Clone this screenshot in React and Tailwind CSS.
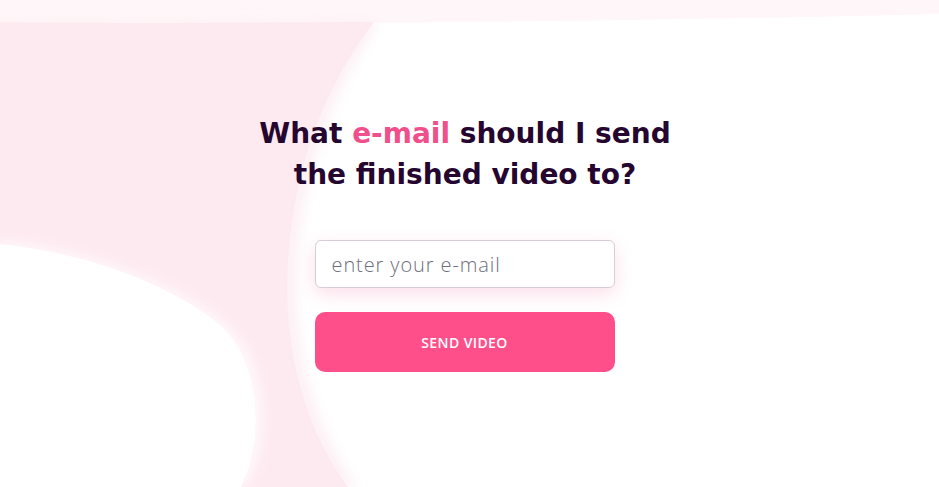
import React from "react";

function Backdrop() {
  return (
    <svg
      className="absolute inset-0 h-full w-full"
      viewBox="0 0 939 487"
      preserveAspectRatio="none"
    >
      <defs>
        <filter id="soft" x="-10%" y="-10%" width="120%" height="120%">
          <feGaussianBlur stdDeviation="6" />
        </filter>
      </defs>
      <rect x="0" y="0" width="939" height="487" fill="#ffffff" />
      <path d="M0 0 H939 V14 C700 20 400 24 0 24 Z" fill="#fef6f8" />
      <path
        d="M0 22 C120 24 260 22 380 22 C334 90 304 170 298 260 C292 350 316 430 358 487 H0 Z"
        fill="#fdf1f5"
        filter="url(#soft)"
      />
      <path
        d="M0 22 C120 24 260 22 374 22 C322 90 294 170 288 260 C282 350 306 430 348 487 H0 Z"
        fill="#fdeaf0"
      />
      <path
        d="M0 240 C90 250 170 280 222 320 C262 350 268 410 260 450 C256 470 250 480 247 487 H0 Z"
        fill="#fff8fa"
        filter="url(#soft)"
      />
      <path
        d="M0 244 C90 254 168 284 216 322 C254 352 260 410 253 450 C249 470 244 480 241 487 H0 Z"
        fill="#ffffff"
      />
    </svg>
  );
}

export default function App() {
  return (
    <div className="relative h-[487px] w-[939px] overflow-hidden bg-white">
      <Backdrop />
      <div className="relative flex flex-col items-center">
        <h1
          className="mt-[113px] ml-[-9px] w-[500px] text-center text-[28px] font-bold leading-[41px] text-[#25062f]"
          style={{ fontFamily: '"DejaVu Sans", sans-serif' }}
        >
          What <span className="text-[#ef4f8a]">e-mail</span> should I send
          <br />
          the finished video to?
        </h1>
        <div className="mt-[45px] ml-[-10px] flex w-[300px] flex-col gap-6">
          <input
            type="email"
            placeholder="enter your e-mail"
            className="h-12 w-full rounded-md border border-[#d8cdd6] bg-white px-4 text-[20px] tracking-[0.9px] text-[#2a2a3a] shadow-[0_6px_18px_rgba(240,80,138,0.18)] outline-none placeholder:text-[#6e6e7c]"
            style={{ fontFamily: '"Open Sans", sans-serif', fontWeight: 300 }}
          />
          <button
            className="h-[60px] w-full rounded-[10px] bg-[#ff4f8b] text-[14px] font-semibold uppercase tracking-[0.4px] text-white"
            style={{ fontFamily: '"Open Sans", sans-serif' }}
          >
            Send video
          </button>
        </div>
      </div>
    </div>
  );
}
